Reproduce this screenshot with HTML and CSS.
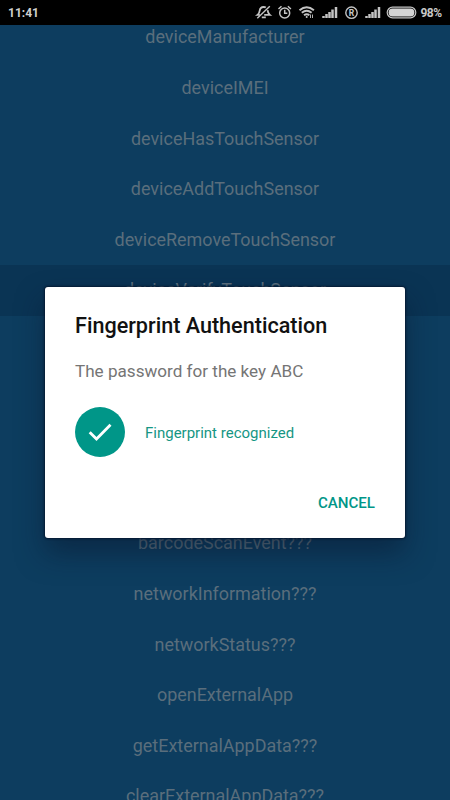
FILE: index.html
```html
<!DOCTYPE html>
<html lang="en">
<head>
<meta charset="utf-8">
<title>Fingerprint Authentication</title>
<link rel="stylesheet" href="styles.css">
</head>
<body>
<div class="screen">
  <header class="status">
    <span class="time">11:41</span>
    <svg class="icons" width="194" height="25" viewBox="250 0 194 25" fill="none" stroke="#c4c4c4" stroke-width="1.5">
      <path d="M259.800 14.900h-2.300c1.600-1.300 2-2.300 2.200-4.200.3-2.400 1.700-3.700 3.900-3.700 1 0 1.600.2 2.200.6M267.600 10.200c.2 2.200.6 3.400 2.200 4.700h-5.600M261.800 17.300h4" stroke-width="1.800"/>
      <path d="M257.300 18.300 269.800 6.300" stroke-width="1.400"/>
      <circle cx="284.700" cy="13" r="5"/>
      <path d="M284.700 9.800v3.400h2.600M278.500 9l3-2.800M290.900 9l-3-2.800" stroke-width="1.500"/>
      <path d="M299.500 10.300q7.200-6.200 14.400 0M301.800 12.800q4.900-4 9.800 0M304 15.200q2.700-2.100 5.400 0" stroke-width="1.900"/>
      <circle cx="306.700" cy="17" r="1" fill="#c4c4c4" stroke="none"/>
      <path d="M310.500 18v-3.500M312.500 14.500V18" stroke-width=".9"/>
      <path d="M323.500 18v-2M326.500 18v-4M329.500 18v-6M332.500 18v-8.500M336 18V7" stroke-width="2.500"/>
      <circle cx="351.500" cy="12.700" r="5.700" stroke-width="1.400"/>
      <path d="M366.500 18v-2M369.500 18v-4M372.500 18v-6M375.500 18v-8.500M379 18V7" stroke-width="2.500"/>
      <rect x="387.200" y="7.200" width="28.600" height="10.600" rx="5.300" stroke-width="1.200"/>
      <rect x="388.600" y="8.600" width="25.800" height="7.800" rx="3.900" fill="#d4d4d4" stroke="none"/>
      <text class="reg" x="351.500" y="15.800" text-anchor="middle">R</text>
      <text class="battery" x="420.500" y="17" textLength="21.500">98%</text>
    </svg>
  </header>
  <main class="content">
    <ul class="list">
      <li>deviceManufacturer</li>
      <li>deviceIMEI</li>
      <li>deviceHasTouchSensor</li>
      <li>deviceAddTouchSensor</li>
      <li>deviceRemoveTouchSensor</li>
      <li class="pressed">deviceVerifyTouchSensor</li>
      <li></li>
      <li></li>
      <li></li>
      <li></li>
      <li>barcodeScanEvent???</li>
      <li>networkInformation???</li>
      <li>networkStatus???</li>
      <li>openExternalApp</li>
      <li>getExternalAppData???</li>
      <li>clearExternalAppData???</li>
    </ul>
  </main>
  <section class="dialog" role="dialog">
    <h1>Fingerprint Authentication</h1>
    <p class="description">The password for the key ABC</p>
    <div class="result">
      <svg class="check" width="50" height="50" viewBox="0 0 50 50"><circle cx="25" cy="25" r="25" fill="#009688"/><path d="M14.700 25.200 21.500 32 35.500 17.800" fill="none" stroke="#fff" stroke-width="2.800"/></svg>
      <span class="message">Fingerprint recognized</span>
    </div>
    <button class="cancel">CANCEL</button>
  </section>
</div>
</body>
</html>
```
FILE: styles.css
```css
* {
  box-sizing: border-box;
}

body {
  margin: 0;
  font-family: Roboto, sans-serif;
}

.screen {
  position: relative;
  display: flex;
  flex-direction: column;
  width: 450px;
  height: 800px;
  overflow: hidden;
  background: #0d3d5f;
}

.status {
  display: flex;
  flex: none;
  align-items: center;
  justify-content: space-between;
  height: 25px;
  padding: 0 6px 0 8px;
  background: #000;
}

.time {
  color: #cfcfcf;
  font-size: 12px;
  font-weight: 700;
}

.icons text {
  fill: #c8c8c8;
  stroke: none;
  font-weight: 700;
}

.icons .reg {
  font-size: 8.5px;
}

.icons .battery {
  font-size: 12px;
}

.content {
  flex: 1;
  min-height: 0;
  overflow: hidden;
}

.list {
  margin: -12.6px 0 0;
  padding: 0;
  list-style: none;
}

.list li {
  height: 50.6px;
  color: #5a6e7c;
  font-size: 17.95px;
  line-height: 50.6px;
  text-align: center;
}

.list .pressed {
  background: #0a3454;
}

.dialog {
  position: absolute;
  top: 287px;
  left: 45px;
  display: flex;
  flex-direction: column;
  width: 360px;
  height: 251px;
  padding: 25px 30px 0;
  border-radius: 3px;
  background: #fff;
  box-shadow: 0 0 2px 1px rgba(5, 20, 42, .8), 0 15px 28px rgba(8, 22, 45, .5);
}

h1 {
  margin: 0;
  color: #111;
  font-size: 21.6px;
  font-weight: 500;
  line-height: 28px;
  white-space: nowrap;
}

.description {
  margin: 19px 0 0;
  color: #757575;
  font-size: 17.1px;
  line-height: 24px;
}

.result {
  display: flex;
  align-items: center;
  gap: 20px;
  margin-top: 24px;
  color: #159684;
  font-size: 15px;
}

.message {
  padding-top: 2px;
}

.cancel {
  align-self: flex-end;
  margin: 36px 0 0;
  padding: 0;
  border: 0;
  background: none;
  color: #009688;
  font: 500 15.1px/20px Roboto, sans-serif;
}
```
